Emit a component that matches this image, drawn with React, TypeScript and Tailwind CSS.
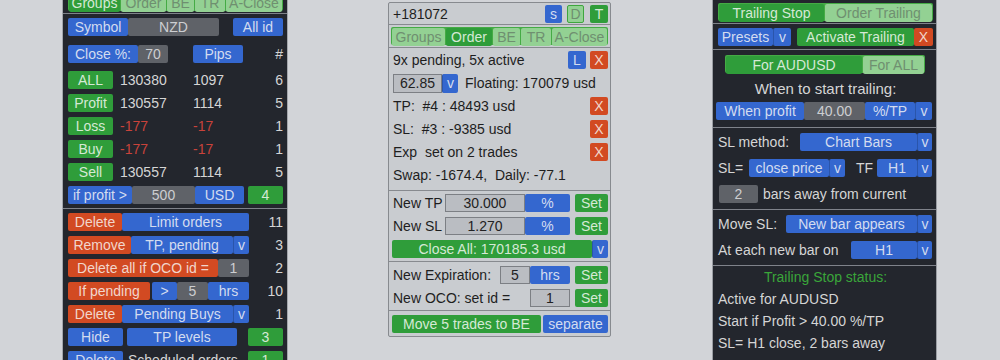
import React from "react";

const BLUE = "bg-[#3467cf] text-[#d3dcef]";
const GREEN = "bg-[#2f9d3a] text-[#d5e9d5]";
const RED = "bg-[#d24a22] text-[#f1d6cc]";
const GRAY = "bg-[#5f6268] text-[#cdced1]";
const LGREEN = "bg-[#93d193] text-[#6f8f70]";
const INP = "bg-[#babdc2] border border-[#7c7f84] text-[#222]";

const B = ({ className = "", children }: { className?: string; children?: React.ReactNode }) => (
  <div className={"h-[18px] shrink-0 flex items-center justify-center rounded-[2px] leading-none whitespace-pre " + className}>
    {children}
  </div>
);

const V = ({ className = "" }: { className?: string }) => (
  <B className={BLUE + " border-l border-[#2a55ab] " + className}>v</B>
);

const LLine = () => <div className="h-px bg-[#7f828a] -ml-[5px] -mr-[4px]" />;
const RLine = () => <div className="h-px bg-[#7f828a] -ml-[5px] -mr-[3px]" />;

const StatRow = ({ label, a, b, c, red }: { label: string; a: string; b: string; c: string; red?: boolean }) => (
  <div className="flex items-center h-[18px] mt-[5px]">
    <B className={GREEN + " w-[45px]"}>{label}</B>
    <div className={"ml-[7px] w-[73px] leading-[18px] " + (red ? "text-[#c9433b]" : "")}>{a}</div>
    <div className={"w-[60px] leading-[18px] " + (red ? "text-[#c9433b]" : "")}>{b}</div>
    <div className="flex-1 text-right leading-[18px]">{c}</div>
  </div>
);

function LeftPanel() {
  return (
    <div className="ml-[62px] mt-[-9px] w-[226px] h-[380px] shrink-0 bg-[#23262d] border-x border-[#a3a6ab] text-[#d5d5d5] pl-[5px] pr-[4px] pt-[2px] flex flex-col">
      <div className="flex h-[18px] bg-[#45ab45] p-px gap-px rounded-[2px]">
        <B className={GREEN + " w-[51px] h-[16px]"}>Groups</B>
        <B className={LGREEN + " w-[45px] h-[16px]"}>Order</B>
        <B className={LGREEN + " w-[27px] h-[16px]"}>BE</B>
        <B className={LGREEN + " w-[30px] h-[16px]"}>TR</B>
        <B className={LGREEN + " flex-1 h-[16px]"}>A-Close</B>
      </div>
      <div className="mt-[2px]">
        <LLine />
      </div>
      <div className="flex mt-[4px]">
        <B className={BLUE + " w-[60px]"}>Symbol</B>
        <B className={GRAY + " w-[91px]"}>NZD</B>
        <div className="flex-1" />
        <B className={BLUE + " w-[50px]"}>All id</B>
      </div>
      <div className="flex mt-[9px] items-center">
        <B className={BLUE + " w-[70px]"}>Close %:</B>
        <B className={GRAY + " w-[30px]"}>70</B>
        <B className={BLUE + " w-[50px] ml-[25px]"}>Pips</B>
        <div className="flex-1 text-right leading-[18px]">#</div>
      </div>
      <div className="mt-[3px]" />
      <StatRow label="ALL" a="130380" b="1097" c="6" />
      <StatRow label="Profit" a="130557" b="1114" c="5" />
      <StatRow label="Loss" a="-177" b="-17" c="1" red />
      <StatRow label="Buy" a="-177" b="-17" c="1" red />
      <StatRow label="Sell" a="130557" b="1114" c="5" />
      <div className="flex mt-[5px]">
        <B className={BLUE + " w-[64px]"}>if profit &gt;</B>
        <B className={GRAY + " w-[63px]"}>500</B>
        <B className={BLUE + " w-[49px]"}>USD</B>
        <B className={GREEN + " w-[35px] ml-[4px]"}>4</B>
      </div>
      <div className="mt-[4px]">
        <LLine />
      </div>
      <div className="flex mt-[4px] items-center">
        <B className={RED + " w-[54px]"}>Delete</B>
        <B className={BLUE + " w-[127px]"}>Limit orders</B>
        <div className="flex-1 text-right leading-[18px]">11</div>
      </div>
      <div className="flex mt-[5px] items-center">
        <B className={RED + " w-[63px]"}>Remove</B>
        <B className={BLUE + " w-[102px]"}>TP, pending</B>
        <V className="w-[16px]" />
        <div className="flex-1 text-right leading-[18px]">3</div>
      </div>
      <div className="flex mt-[5px] items-center">
        <B className={RED + " w-[150px]"}>Delete all if OCO id =</B>
        <B className={GRAY + " w-[31px]"}>1</B>
        <div className="flex-1 text-right leading-[18px]">2</div>
      </div>
      <div className="flex mt-[5px] items-center">
        <B className={RED + " w-[82px]"}>If pending</B>
        <B className={BLUE + " w-[25px] ml-[2px]"}>&gt;</B>
        <B className={GRAY + " w-[31px]"}>5</B>
        <B className={BLUE + " w-[41px]"}>hrs</B>
        <div className="flex-1 text-right leading-[18px]">10</div>
      </div>
      <div className="flex mt-[5px] items-center">
        <B className={RED + " w-[54px]"}>Delete</B>
        <B className={BLUE + " w-[111px]"}>Pending Buys</B>
        <V className="w-[16px]" />
        <div className="flex-1 text-right leading-[18px]">1</div>
      </div>
      <div className="flex mt-[5px] items-center">
        <B className={BLUE + " w-[55px]"}>Hide</B>
        <B className={BLUE + " w-[110px] ml-[4px]"}>TP levels</B>
        <div className="flex-1" />
        <B className={GREEN + " w-[35px]"}>3</B>
      </div>
      <div className="flex mt-[5px] items-center">
        <B className={BLUE + " w-[55px]"}>Delete</B>
        <div className="ml-[5px] leading-[18px]">Scheduled orders</div>
        <div className="flex-1" />
        <B className={GREEN + " w-[35px]"}>1</B>
      </div>
    </div>
  );
}

function MidPanel() {
  return (
    <div className="ml-[100px] mt-[2px] w-[223px] shrink-0 bg-[#c9ccd0] border border-[#878a8f] rounded-[2px] text-[#1e1e1e] flex flex-col">
      <div className="h-[22px] flex items-center pl-[4px] pr-[2px] border-b border-[#878a8f]">
        <div className="flex-1 leading-[18px]">+181072</div>
        <B className={BLUE + " w-[17px] h-[16px]"}>s</B>
        <B className={LGREEN + " w-[17px] h-[16px] ml-[5px] border border-[#3ea63e]"}>D</B>
        <B className={GREEN + " w-[18px] h-[16px] ml-[6px]"}>T</B>
      </div>
      <div className="h-[23px] px-[2px] pt-[2px] border-b border-[#878a8f]">
        <div className="flex h-[18px] bg-[#45ab45] p-px gap-px rounded-[2px]">
          <B className={LGREEN + " w-[53px] h-[16px]"}>Groups</B>
          <B className={GREEN + " w-[46px] h-[16px]"}>Order</B>
          <B className={LGREEN + " w-[27px] h-[16px]"}>BE</B>
          <B className={LGREEN + " w-[30px] h-[16px]"}>TR</B>
          <B className={LGREEN + " flex-1 h-[16px]"}>A-Close</B>
        </div>
      </div>
      <div className="pl-[4px] pr-[2px] pt-[3px] pb-[6px] flex flex-col gap-[5px] border-b border-[#878a8f]">
        <div className="flex items-center h-[18px]">
          <div className="flex-1 leading-[18px]">9x pending, 5x active</div>
          <B className={BLUE + " w-[18px]"}>L</B>
          <B className={RED + " w-[18px] ml-[4px]"}>X</B>
        </div>
        <div className="flex items-center h-[18px]">
          <B className={INP + " w-[49px] h-[19px] rounded-none"}>62.85</B>
          <V className="w-[16px] h-[19px]" />
          <div className="ml-[7px] leading-[18px]">Floating: 170079 usd</div>
        </div>
        <div className="flex items-center h-[18px]">
          <div className="flex-1 leading-[18px] whitespace-pre">TP:  #4 : 48493 usd</div>
          <B className={RED + " w-[18px]"}>X</B>
        </div>
        <div className="flex items-center h-[18px]">
          <div className="flex-1 leading-[18px] whitespace-pre">SL:  #3 : -9385 usd</div>
          <B className={RED + " w-[18px]"}>X</B>
        </div>
        <div className="flex items-center h-[18px]">
          <div className="flex-1 leading-[18px] whitespace-pre">Exp  set on 2 trades</div>
          <B className={RED + " w-[18px]"}>X</B>
        </div>
        <div className="flex items-center h-[18px]">
          <div className="flex-1 leading-[18px] whitespace-pre">Swap: -1674.4,  Daily: -77.1</div>
        </div>
      </div>
      <div className="pl-[4px] pr-[2px] pt-[3px] pb-[3px] flex flex-col gap-[5px] border-b border-[#878a8f]">
        <div className="flex items-center h-[18px]">
          <div className="w-[52px] leading-[18px]">New TP</div>
          <B className={INP + " w-[80px] rounded-none"}>30.000</B>
          <B className={BLUE + " w-[45px]"}>%</B>
          <B className={GREEN + " w-[33px] ml-[5px]"}>Set</B>
        </div>
        <div className="flex items-center h-[18px]">
          <div className="w-[52px] leading-[18px]">New SL</div>
          <B className={INP + " w-[80px] rounded-none"}>1.270</B>
          <B className={BLUE + " w-[45px]"}>%</B>
          <B className={GREEN + " w-[33px] ml-[5px]"}>Set</B>
        </div>
        <div className="flex items-center h-[18px] -ml-[1px]">
          <B className={GREEN + " flex-1"}>Close All: 170185.3 usd</B>
          <V className="w-[16px]" />
        </div>
      </div>
      <div className="pl-[4px] pr-[2px] pt-[4px] pb-[3px] flex flex-col gap-[5px] border-b border-[#878a8f]">
        <div className="flex items-center h-[18px]">
          <div className="w-[107px] leading-[18px]">New Expiration:</div>
          <B className={INP + " w-[30px] rounded-none"}>5</B>
          <B className={BLUE + " w-[40px]"}>hrs</B>
          <B className={GREEN + " w-[33px] ml-[5px]"}>Set</B>
        </div>
        <div className="flex items-center h-[18px]">
          <div className="w-[137px] leading-[18px]">New OCO: set id =</div>
          <B className={INP + " w-[40px] rounded-none"}>1</B>
          <B className={GREEN + " w-[33px] ml-[5px]"}>Set</B>
        </div>
      </div>
      <div className="pl-[3px] pr-[2px] pt-[4px] pb-[3px] flex">
        <B className={GREEN + " w-[149px]"}>Move 5 trades to BE</B>
        <B className={BLUE + " flex-1 ml-[2px]"}>separate</B>
      </div>
    </div>
  );
}

function RightPanel() {
  return (
    <div className="ml-[101px] mt-[-1px] w-[225px] h-[370px] shrink-0 bg-[#23262d] border border-[#9a9da3] text-[#d5d5d5] pl-[5px] pr-[3px] pt-[3px] flex flex-col">
      <div className="flex h-[18px] bg-[#45ab45] p-px gap-px rounded-[2px]">
        <B className={GREEN + " w-[105px] h-[16px]"}>Trailing Stop</B>
        <B className={LGREEN + " flex-1 h-[16px]"}>Order Trailing</B>
      </div>
      <div className="mt-[2px]">
        <RLine />
      </div>
      <div className="flex mt-[4px]">
        <B className={BLUE + " w-[55px]"}>Presets</B>
        <V className="w-[18px]" />
        <B className={GREEN + " w-[117px] ml-[6px]"}>Activate Trailing</B>
        <B className={RED + " w-[19px]"}>X</B>
      </div>
      <div className="mt-[3px]">
        <RLine />
      </div>
      <div className="flex mt-[5px] ml-[7px]">
        <div className="flex h-[18px] bg-[#45ab45] p-px gap-px rounded-[2px]">
          <B className={GREEN + " w-[136px] h-[16px]"}>For AUDUSD</B>
          <B className={LGREEN + " w-[61px] h-[16px]"}>For ALL</B>
        </div>
      </div>
      <div className="mt-[7px] h-[18px] leading-[18px] text-center text-[15px]">When to start trailing:</div>
      <div className="flex mt-[4px] -ml-[2px]">
        <B className={BLUE + " w-[88px]"}>When profit</B>
        <B className={GRAY + " w-[61px]"}>40.00</B>
        <B className={BLUE + " w-[50px]"}>%/TP</B>
        <V className="w-[17px]" />
      </div>
      <div className="mt-[7px]">
        <RLine />
      </div>
      <div className="flex mt-[5px] items-center">
        <div className="w-[82px] leading-[18px]">SL method:</div>
        <B className={BLUE + " w-[117px]"}>Chart Bars</B>
        <V className="w-[15px]" />
      </div>
      <div className="flex mt-[8px] items-center">
        <div className="w-[31px] leading-[18px]">SL=</div>
        <B className={BLUE + " w-[80px]"}>close price</B>
        <V className="w-[16px]" />
        <div className="w-[21px] ml-[11px] leading-[18px]">TF</div>
        <B className={BLUE + " w-[40px]"}>H1</B>
        <V className="w-[15px]" />
      </div>
      <div className="flex mt-[8px] items-center">
        <B className={GRAY + " w-[39px] ml-[1px]"}>2</B>
        <div className="ml-[5px] leading-[18px]">bars away from current</div>
      </div>
      <div className="mt-[6px]">
        <RLine />
      </div>
      <div className="flex mt-[5px] items-center">
        <div className="w-[68px] leading-[18px]">Move SL:</div>
        <B className={BLUE + " w-[131px]"}>New bar appears</B>
        <V className="w-[15px]" />
      </div>
      <div className="flex mt-[8px] items-center">
        <div className="w-[133px] leading-[18px]">At each new bar on</div>
        <B className={BLUE + " w-[66px]"}>H1</B>
        <V className="w-[15px]" />
      </div>
      <div className="mt-[6px]">
        <RLine />
      </div>
      <div className="h-[22px] leading-[22px] text-center text-[#3aa53a]">Trailing Stop status:</div>
      <div className="h-[22px] leading-[22px]">Active for AUDUSD</div>
      <div className="h-[22px] leading-[22px]">Start if Profit &gt; 40.00 %/TP</div>
      <div className="h-[22px] leading-[22px]">SL= H1 close, 2 bars away</div>
    </div>
  );
}

export default function App() {
  return (
    <div className="w-[1000px] h-[360px] overflow-hidden bg-[#d2d4d8] flex items-start font-['Liberation_Sans',Arial,sans-serif] text-[14px]">
      <LeftPanel />
      <MidPanel />
      <RightPanel />
    </div>
  );
}
